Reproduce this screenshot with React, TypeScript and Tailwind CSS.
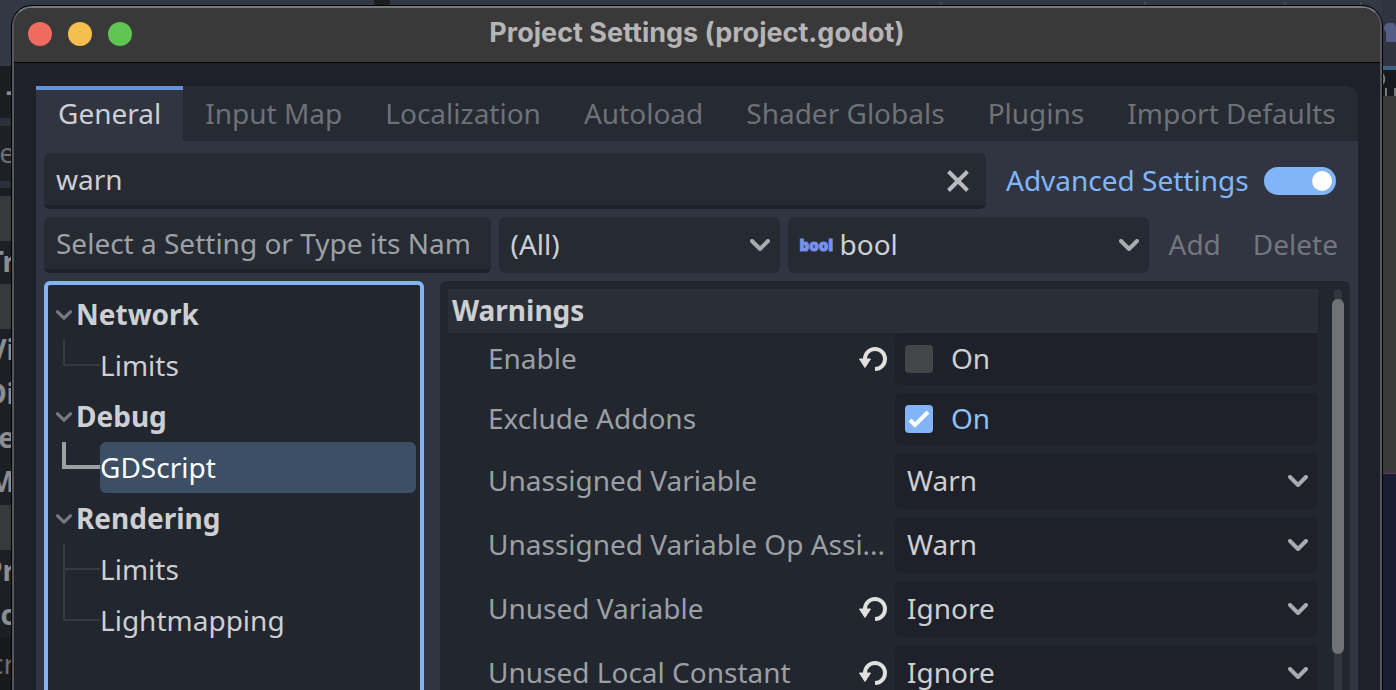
import { useState } from "react";
import type { ReactNode } from "react";

type TreeGroup = {
  label: string;
  items: string[];
};

type WarningRow = {
  label: string;
  level: string;
  changed?: boolean;
};

const tabs = ["General", "Input Map", "Localization", "Autoload", "Shader Globals", "Plugins", "Import Defaults"];

const groups: TreeGroup[] = [
  { label: "Network", items: ["Limits"] },
  { label: "Debug", items: ["GDScript"] },
  { label: "Rendering", items: ["Limits", "Lightmapping"] },
];

const warnings: WarningRow[] = [
  { label: "Unassigned Variable", level: "Warn" },
  { label: "Unassigned Variable Op Assi...", level: "Warn" },
  { label: "Unused Variable", level: "Ignore", changed: true },
  { label: "Unused Local Constant", level: "Ignore", changed: true },
];

const levels = ["Ignore", "Warn", "Error"];

export default function App() {
  return (
    <main className="relative h-screen overflow-hidden bg-[#333845] font-['Noto_Sans',sans-serif] text-[28px] leading-[38px] text-[#cdcfd2]">
      <EditorBackdrop />
      <div className="relative mt-1.5 mr-3.5 ml-3 overflow-hidden rounded-t-[20px] border-2 border-b-0 border-[#55575a] border-t-[#78797b] bg-[#1e2129] ring-1 ring-black">
        <TitleBar />
        <div className="px-[22px] pt-[23px]">
          <TabBar />
          <div className="flex flex-col gap-2 bg-[#303541] px-2 pt-3">
            <SearchRow />
            <AddSettingRow />
            <div className="flex gap-4">
              <SettingsTree />
              <Inspector />
            </div>
          </div>
        </div>
      </div>
    </main>
  );
}

/**
 * Slivers of the editor that stay visible around the dialog.
 */
function EditorBackdrop() {
  return (
    <div aria-hidden="true" className="absolute inset-0 flex text-[#8b8d90]">
      <div className="flex w-[15px] flex-col overflow-hidden font-bold">
        <Band className="h-[66px] bg-[#333845]" />
        <Band className="h-[52px] bg-[#1b1d21]">-</Band>
        <Band className="h-2 bg-[#2a2f39]" />
        <Band className="h-[55px] bg-[#1d2025] font-normal text-[#6c6e71]">te</Band>
        <Band className="h-[7px] bg-[#2a2f39]" />
        <Band className="h-2 bg-[#1a1d21]" />
        <Band className="h-[45px] bg-[#38393b]" />
        <Band className="h-[43px] bg-[#1c1f24]">Tr</Band>
        <Band className="h-[45px] bg-[#38393b]" />
        <Band className="h-11 bg-[#1c1f24]">Vi</Band>
        <Band className="h-11 bg-[#1c1f24]">Di</Band>
        <Band className="h-11 bg-[#1c1f24]">Te</Band>
        <Band className="h-11 bg-[#1c1f24]">M</Band>
        <Band className="h-[45px] bg-[#38393b]" />
        <Band className="h-11 bg-[#1c1f24]">Pr</Band>
        <Band className="h-11 bg-[#1c1f24]">Sc</Band>
        <Band className="h-[54px] bg-[#17191d] font-normal text-[#6c6e71]">cr</Band>
      </div>
      <div className="flex h-1.5 flex-1">
        <div className="ml-[359px] w-4 bg-[#1b1d21]" />
        <div className="flex flex-1 items-end justify-end pr-5">
          <span className="mr-[202px] h-1 w-0.5 bg-[#454a57]" />
          <span className="mr-[138px] h-1 w-0.5 bg-[#454a57]" />
          <span className="mr-[74px] h-1 w-0.5 bg-[#454a57]" />
          <span className="h-1 w-0.5 bg-[#454a57]" />
        </div>
      </div>
      <div className="flex w-3.5 flex-col overflow-hidden">
        <Band className="h-[66px] bg-[#2f3440]">
          <svg className="h-5 w-3 shrink-0" viewBox="0 0 12 20">
            <path d="M5 0a5 5 0 0 0-3 9v10h10V3a5 5 0 0 0-7-3z" fill="#535d86" />
          </svg>
        </Band>
        <Band className="h-1 bg-[#40607f]" />
        <Band className="h-[26px] bg-[#16191d]">
          <svg className="h-[26px] w-3.5 shrink-0" fill="none" stroke="#77797c" viewBox="0 0 14 26">
            <path d="M0 4c3 2 3 8 0 10" strokeWidth="2" />
            <path d="M4 18v8M13 18v8" strokeWidth="2" />
          </svg>
        </Band>
        <Band className="h-[377px] bg-[#393939]" />
        <Band className="h-px bg-[#5d3a63]" />
        <Band className="grow bg-[#1a1d31]" />
      </div>
    </div>
  );
}

function Band({ className, children }: { className: string; children?: ReactNode }) {
  return (
    <div className={`flex shrink-0 items-center justify-end ${className}`}>
      {typeof children === "string" ? <span className="pb-1">{children}</span> : children}
    </div>
  );
}

function TitleBar() {
  return (
    <header className="grid h-[55px] grid-cols-[1fr_auto_1fr] items-center border-b border-black bg-[#39393a] px-3.5 pb-0.5">
      <div className="flex gap-4">
        <button aria-label="Close" className="size-6 rounded-full bg-[#ed6b5f]" type="button" />
        <button aria-label="Minimize" className="size-6 rounded-full bg-[#f5bf4f]" type="button" />
        <button aria-label="Zoom" className="size-6 rounded-full bg-[#61c554]" type="button" />
      </div>
      <h1 className="pb-0.5 font-['Inter',sans-serif] text-[27px] leading-8 font-bold text-[#b5b5b6]">
        Project Settings (project.godot)
      </h1>
    </header>
  );
}

function TabBar() {
  const [active, setActive] = useState("General");

  return (
    <nav className="flex h-[55px] overflow-hidden rounded-tr-xl bg-[#262a33]">
      {tabs.map((tab) => (
        <button
          className={`border-t-4 pb-1.5 pl-[22px] whitespace-nowrap ${
            tab === active
              ? "border-[#699ce8]/90 bg-[#303541] pr-[22px]"
              : "border-transparent pr-[21px] text-[#6e7176]"
          }`}
          key={tab}
          type="button"
          onClick={() => setActive(tab)}
        >
          {tab}
        </button>
      ))}
    </nav>
  );
}

function SearchRow() {
  const [query, setQuery] = useState("warn");

  return (
    <div className="flex gap-2">
      <div className="flex h-14 min-w-0 flex-1 items-center rounded-md border-b-4 border-[#1e2129] bg-[#262a33] pr-4 pl-3">
        <input
          aria-label="Filter Settings"
          className="min-w-0 flex-1 bg-transparent outline-none"
          value={query}
          onChange={(event) => setQuery(event.target.value)}
        />
        <button aria-label="Clear" className="pt-1" type="button" onClick={() => setQuery("")}>
          <svg className="size-6" fill="none" stroke="#b9babd" strokeWidth="4" viewBox="0 0 24 24">
            <path d="M2.5 2.5l19 19M21.5 2.5l-19 19" />
          </svg>
        </button>
      </div>
      <label className="flex w-[356px] items-center justify-between pr-3.5 pl-3 whitespace-nowrap text-[#82b5f7]">
        <span className="pb-0.5">Advanced Settings</span>
        <input
          className="h-7 w-[72px] appearance-none rounded-full bg-[#55585e] p-1 before:block before:size-5 before:rounded-full before:bg-white checked:bg-[#82b5f7] checked:before:ml-11"
          defaultChecked
          type="checkbox"
        />
      </label>
    </div>
  );
}

function AddSettingRow() {
  return (
    <div className="flex gap-2">
      <input
        aria-label="Setting name"
        className="h-14 min-w-0 flex-1 rounded-md border-b-4 border-[#1e2129] bg-[#262a33] px-3 outline-none placeholder:text-[#9da0a4]"
        placeholder="Select a Setting or Type its Nam"
      />
      <div className="w-[281px]">
        <Dropdown className="bg-[#262a33] pl-3" label="Feature" options={["(All)"]} value="(All)" />
      </div>
      <div className="relative w-[361px]">
        <Dropdown className="bg-[#262a33] pl-[52px]" label="Type" options={["bool", "int", "float"]} value="bool" />
        <span
          aria-hidden="true"
          className="pointer-events-none absolute inset-y-0 left-3 flex items-center text-[15px] font-black text-[#7790ec] [-webkit-text-stroke:1px_#7790ec]"
        >
          bool
        </span>
      </div>
      <button className="px-3 pb-0.5 text-[#72767e]" disabled type="button">
        Add
      </button>
      <button className="px-3 pb-0.5 text-[#72767e]" disabled type="button">
        Delete
      </button>
    </div>
  );
}

type DropdownProps = {
  className: string;
  label: string;
  options: string[];
  value: string;
};

function Dropdown({ className, label, options, value }: DropdownProps) {
  return (
    <div className="relative">
      <select
        aria-label={label}
        className={`block h-14 w-full appearance-none rounded-md pr-10 pb-0.5 outline-none ${className}`}
        defaultValue={value}
      >
        {options.map((option) => (
          <option key={option}>{option}</option>
        ))}
      </select>
      <span className="pointer-events-none absolute inset-y-0 right-2.5 flex items-center">
        <Chevron className="h-3 w-5 text-[#a9abae]" />
      </span>
    </div>
  );
}

function Chevron({ className }: { className: string }) {
  return (
    <svg
      aria-hidden="true"
      className={className}
      fill="none"
      stroke="currentColor"
      strokeLinecap="round"
      strokeLinejoin="round"
      strokeWidth="4"
      viewBox="0 0 20 12"
    >
      <path d="M2 2l8 8 8-8" />
    </svg>
  );
}

function SettingsTree() {
  const [selected, setSelected] = useState("Debug/GDScript");

  return (
    <div className="w-[380px] shrink-0 rounded-md border-4 border-[#82b5f7] bg-[#22262e] px-1 pt-1 pb-20">
      {groups.map((group) => (
        <div key={group.label}>
          <button className="flex h-[51px] w-full items-center gap-1 pl-1 font-bold" type="button">
            <Chevron className="h-2.5 w-4 text-[#77797e]" />
            <span className="pb-0.5">{group.label}</span>
          </button>
          {group.items.map((item, index) => {
            const path = `${group.label}/${item}`;
            const isSelected = path === selected;
            const isLast = index === group.items.length - 1;

            return (
              <div className="flex h-[51px]" key={item}>
                <div className={`flex w-12 flex-col ${isSelected ? "pl-2.5" : "pl-[11px]"}`}>
                  <span
                    className={
                      isSelected
                        ? "h-[27px] border-b-4 border-l-4 border-[#9d9fa2]"
                        : "h-[26px] border-b-2 border-l-2 border-[#363a43]"
                    }
                  />
                  {!isLast && <span className="grow border-l-2 border-[#363a43]" />}
                </div>
                <button
                  className={`flex-1 rounded-md pb-0.5 text-left ${isSelected ? "bg-[#3d4f65] text-white" : ""}`}
                  type="button"
                  onClick={() => setSelected(path)}
                >
                  {item}
                </button>
              </div>
            );
          })}
        </div>
      ))}
    </div>
  );
}

function Inspector() {
  return (
    <section className="flex min-w-0 flex-1 gap-3.5 rounded-md bg-[#22262e] py-2 pr-1.5 pl-2">
      <div className="min-w-0 flex-1">
        <h2 className="h-11 bg-[#2a2e36] px-1 leading-[42px] font-bold">Warnings</h2>
        <div className="flex flex-col gap-2">
          <PropertyRow changed label="Enable">
            <ToggleField label="Enable" />
          </PropertyRow>
          <PropertyRow label="Exclude Addons">
            <ToggleField defaultChecked label="Exclude Addons" />
          </PropertyRow>
          {warnings.map((warning) => (
            <PropertyRow changed={warning.changed} key={warning.label} label={warning.label}>
              <Dropdown className="bg-[#1e2129] pl-3" label={warning.label} options={levels} value={warning.level} />
            </PropertyRow>
          ))}
        </div>
      </div>
      <div className="flex w-3 justify-center">
        <div className="flex w-2 justify-center rounded-full bg-[#32363e] pt-2.5">
          <div className="h-[355px] w-3 shrink-0 rounded-full bg-[#6f7276]" />
        </div>
      </div>
    </section>
  );
}

type PropertyRowProps = {
  changed?: boolean;
  children: ReactNode;
  label: string;
};

function PropertyRow({ changed = false, children, label }: PropertyRowProps) {
  return (
    <div className="grid grid-cols-[447fr_423fr] items-center">
      <div className="flex min-w-0 items-center justify-between pr-[7px] pl-10 whitespace-nowrap text-[#9c9fa3]">
        <span className="pb-0.5">{label}</span>
        {changed && (
          <button aria-label={`Reset ${label}`} type="button">
            <RevertIcon />
          </button>
        )}
      </div>
      {children}
    </div>
  );
}

function ToggleField({ defaultChecked, label }: { defaultChecked?: boolean; label: string }) {
  return (
    <label className="flex h-[52px] items-center gap-[18px] rounded-md bg-[#1e2129] pl-2.5 has-checked:text-[#8fc0f8]">
      <span className="relative size-7">
        <input
          aria-label={label}
          className="peer block size-7 appearance-none rounded-[4px] bg-[#434549] checked:bg-[#82b5f7]"
          defaultChecked={defaultChecked}
          type="checkbox"
        />
        <svg
          aria-hidden="true"
          className="pointer-events-none absolute inset-0 hidden size-7 peer-checked:block"
          fill="none"
          stroke="white"
          strokeWidth="4"
          viewBox="0 0 28 28"
        >
          <path d="M5 15l5 5L23 7" />
        </svg>
      </span>
      <span className="pb-0.5">On</span>
    </label>
  );
}

function RevertIcon() {
  return (
    <svg aria-hidden="true" className="block h-[26px] w-[30px]" viewBox="0 0 30 26">
      <path d="M17 23a10 10 0 1 0-10-10" fill="none" stroke="#e0e0e0" strokeWidth="4" />
      <path d="M1.5 13h11L7 21.5z" fill="#e0e0e0" stroke="#e0e0e0" strokeLinejoin="round" strokeWidth="1" />
    </svg>
  );
}
